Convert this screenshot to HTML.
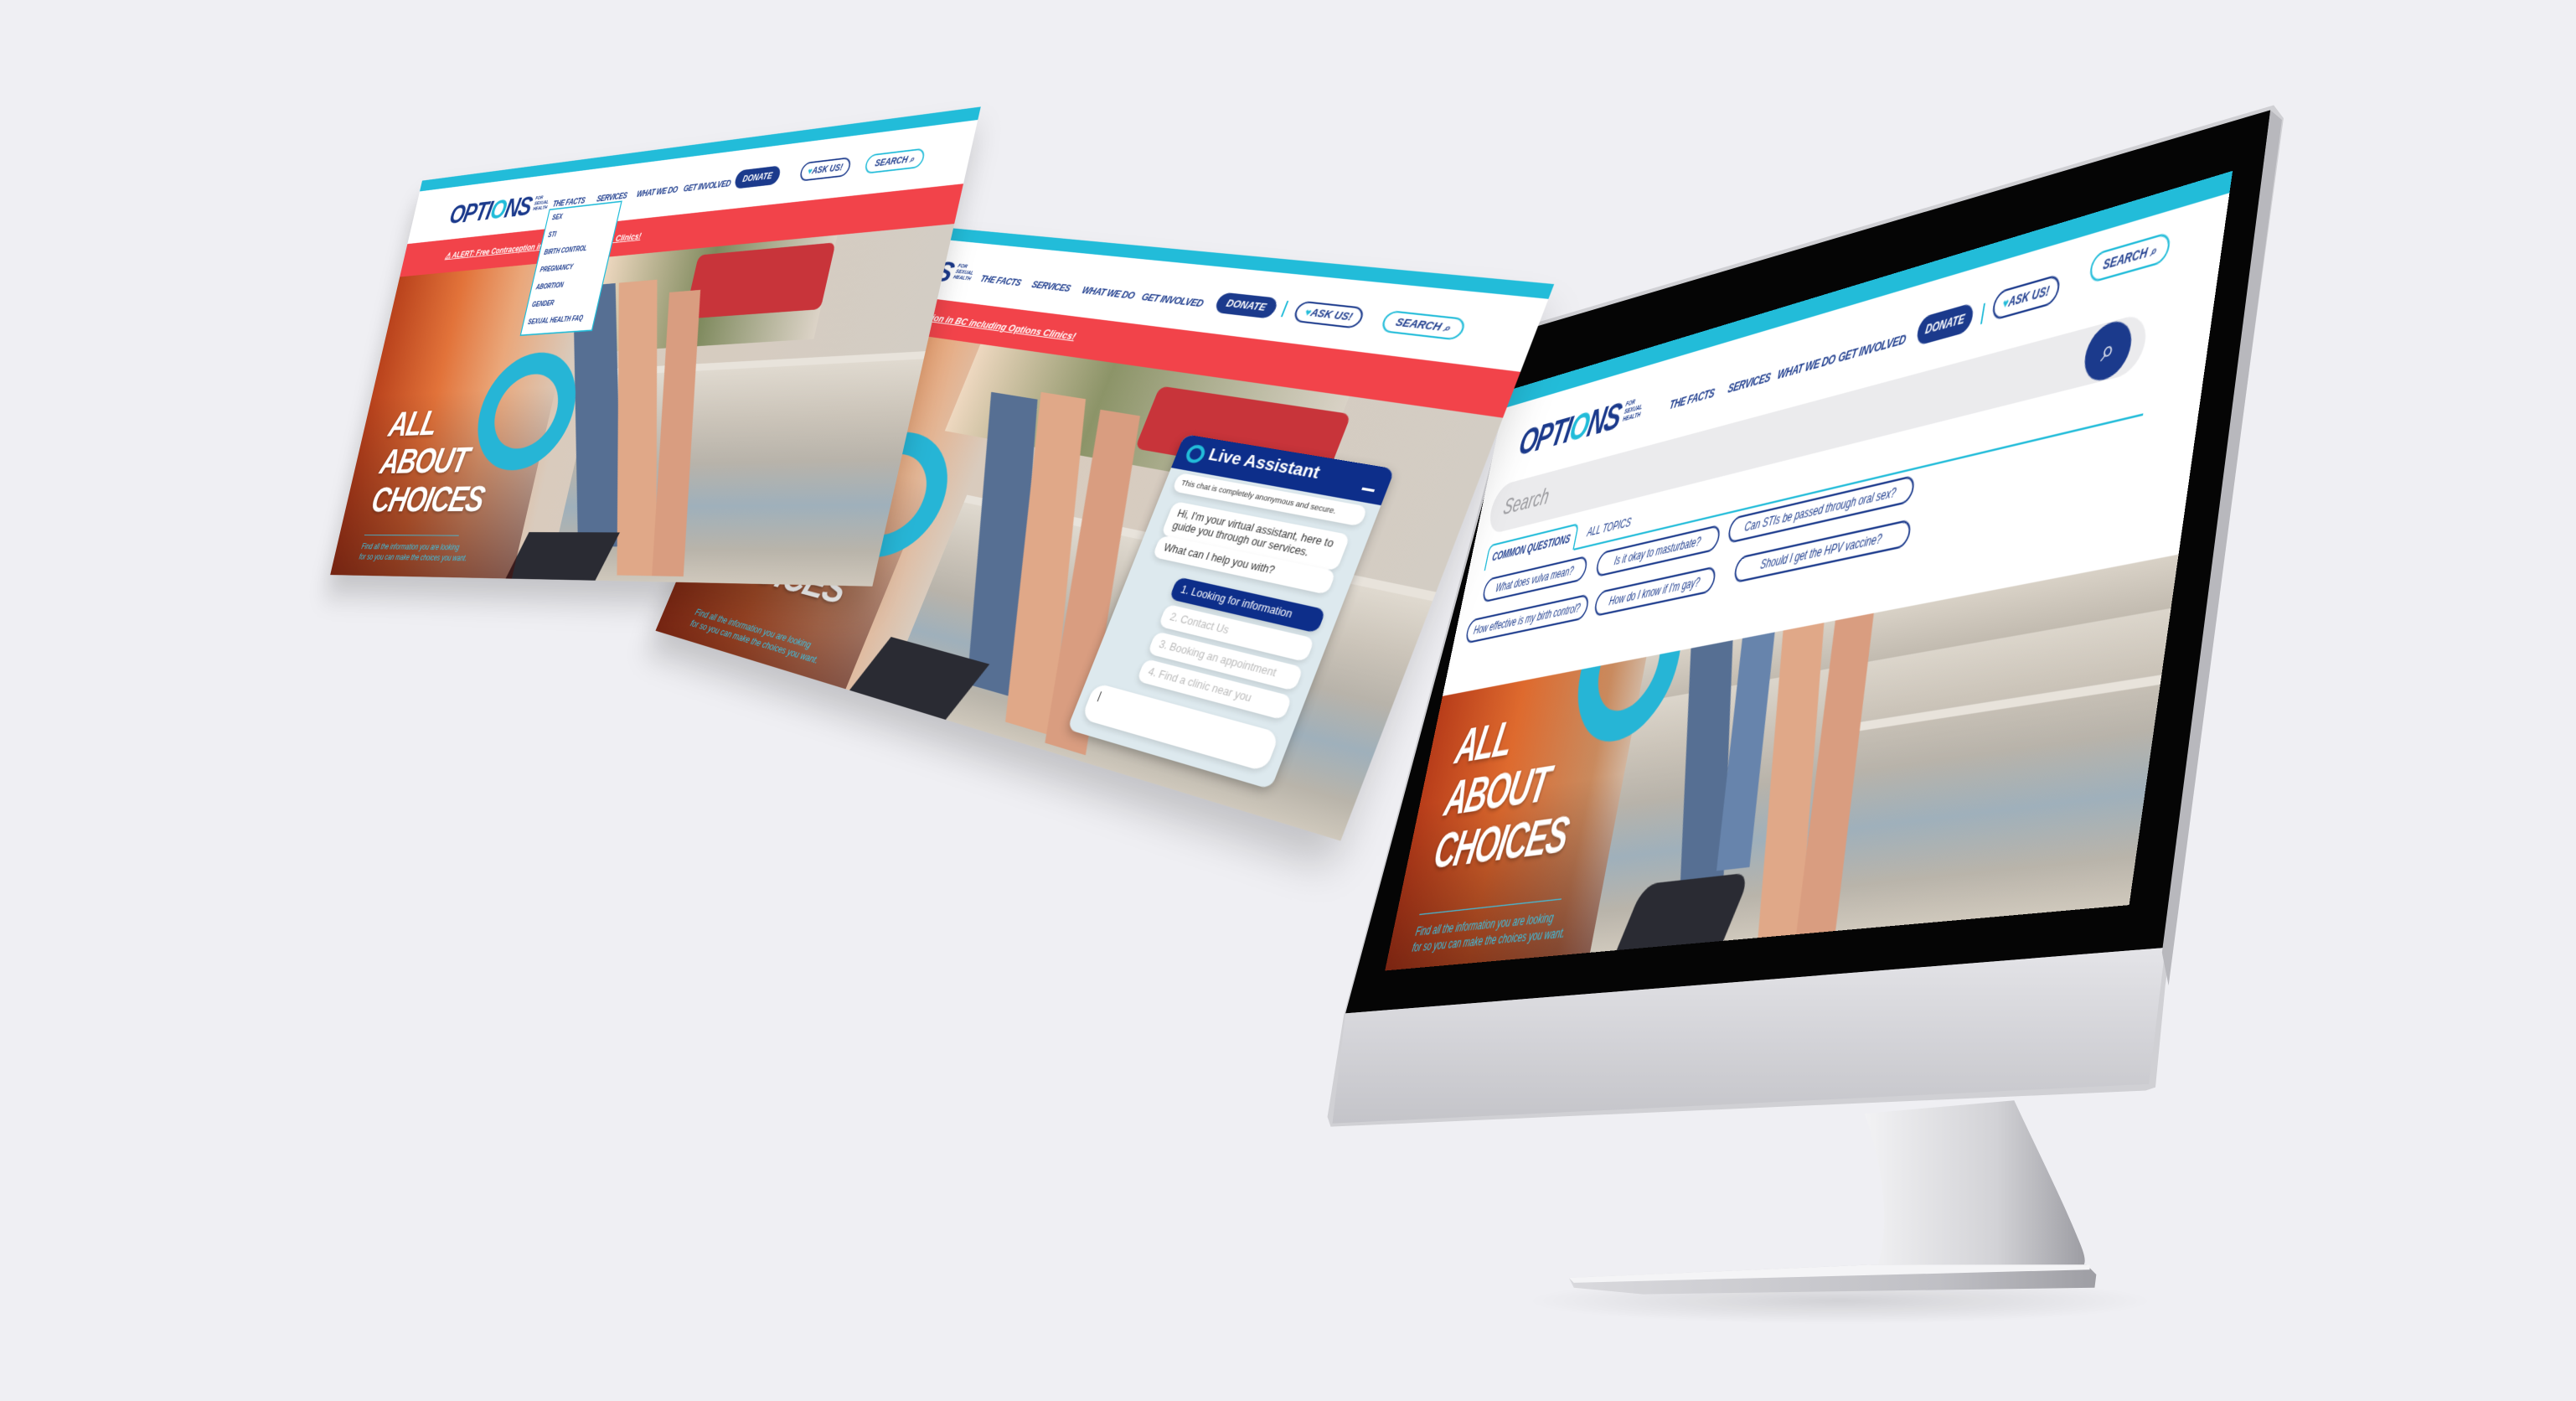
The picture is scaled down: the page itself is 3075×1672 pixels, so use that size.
<!DOCTYPE html>
<html><head><meta charset="utf-8">
<style>
html,body{margin:0;padding:0}
body{width:3075px;height:1672px;overflow:hidden;position:relative;background:#efeff3;font-family:"Liberation Sans",sans-serif}
#stage{position:absolute;left:0;top:0;width:1568px;height:853px;transform:scale(1.96110,1.96014);transform-origin:0 0}
.pg{position:absolute;left:0;top:0;width:1000px;height:620px;transform-origin:0 0;overflow:hidden;background:#fff;font-family:"Liberation Sans",sans-serif}
.cy{position:absolute;left:0;top:0;width:1000px;height:17px;background:#22bcd9}
.logo{position:absolute;font-style:italic;font-weight:bold;color:#1b3a8c;letter-spacing:-2px;white-space:nowrap}
.logo i{color:#22bcd9;font-style:italic}
.logo small{position:absolute;font-size:7px;line-height:8px;letter-spacing:0;top:8px;font-weight:bold}
.nav{position:absolute;font-style:italic;font-weight:bold;font-size:12px;color:#1b3a8c;white-space:nowrap;letter-spacing:-.5px}
.pill{position:absolute;box-sizing:border-box;border-radius:16px;font-style:italic;font-weight:bold;font-size:12px;text-align:center;white-space:nowrap}
.don{background:#1b3a8c;color:#fff}
.ask{border:2px solid #1b3a8c;color:#1b3a8c;background:#fff}
.srch{border:2px solid #22bcd9;color:#1b3a8c;background:#fff}
.red{position:absolute;left:0;top:100px;width:1000px;height:52px;background:#f2434a}
.alert{position:absolute;left:90px;top:18px;color:#fff;font-size:13px;font-style:italic;font-weight:bold;text-decoration:underline;white-space:nowrap}
.photo{position:absolute;left:0;width:1000px;overflow:hidden;background:linear-gradient(90deg,#b9421c 0%,#e2733a 14%,#eaa77a 26%,#d9cbbd 40%,#d3cdc4 100%)}
.a{position:absolute}
.big{position:absolute;color:#fff;font-style:italic;font-weight:bold;letter-spacing:-2px;line-height:1.08;text-shadow:0 2px 4px rgba(0,0,0,.3)}
.find{position:absolute;color:#3cc4e6;font-style:italic;font-size:12px;line-height:16px;white-space:nowrap}
.q{position:absolute;box-sizing:border-box;border:2px solid #1b3a8c;border-radius:14px;height:26px;font-size:12px;font-style:italic;color:#1b3a8c;line-height:22px;text-align:center;white-space:nowrap;background:#fff}
.bub{position:absolute;background:#fff;border-radius:10px;box-shadow:0 3px 6px rgba(0,0,0,.12);font-size:12px;color:#333;line-height:15px;box-sizing:border-box;padding:6px 10px}
.wall{background:linear-gradient(180deg,#e1dbd1 0%,#cbc4b9 25%,#b8b3aa 45%,#9fb0bb 65%,#b9b4aa 85%,#cfc8bc 100%)}
</style></head><body>
<div id="stage">

<svg style="position:absolute;left:0;top:0" width="1568" height="853" viewBox="0 0 1568 853">
<defs>
<linearGradient id="chin" x1="0" y1="0" x2="0" y2="1"><stop offset="0" stop-color="#e4e4e8"/><stop offset="1" stop-color="#c4c4c9"/></linearGradient>
<linearGradient id="neck" x1="0" y1="0" x2="1" y2="0"><stop offset="0" stop-color="#f2f2f4"/><stop offset=".6" stop-color="#d2d2d6"/><stop offset="1" stop-color="#9d9da3"/></linearGradient>
<linearGradient id="base" x1="0" y1="0" x2="1" y2="0"><stop offset="0" stop-color="#d9d9dd"/><stop offset=".7" stop-color="#c0c0c5"/><stop offset="1" stop-color="#9e9ea4"/></linearGradient>
<radialGradient id="sh" cx=".5" cy=".5" r=".5"><stop offset="0" stop-color="#000" stop-opacity=".12"/><stop offset="1" stop-color="#000" stop-opacity="0"/></radialGradient>
</defs>
<ellipse cx="1120" cy="792" rx="190" ry="14" fill="url(#sh)"/>
<path d="M1135 678 L1226 670 C1240 700 1255 730 1264 752 C1270 766 1272 772 1262 774 L1140 776 C1150 760 1150 720 1135 678 Z" fill="url(#neck)"/>
<path d="M955 778 L1140 770 L1270 770 L1276 776 L1275 784 L1000 788 L958 784 Z" fill="url(#base)"/>
<path d="M955 778 L1140 770 L1272 770 L1272 773 L958 781 Z" fill="#f4f4f6"/>
<polygon points="930,198 1384,64 1390,72 1318,600 1312,662 1306,664 810,686 808,680 818,618" fill="#d0d0d4"/>
<polygon points="931,200 1382,67 1318,577 819,617" fill="#050505"/>
<polygon points="819,617 1318,577 1308,660 811,684" fill="url(#chin)"/>
<polygon points="1382,67 1389,73 1320,600 1316,580" fill="#b8b8bd"/>
</svg>

<!-- iMac display page -->
<div class="pg" style="transform:matrix3d(0.14962,-0.15637,0,-0.00021514,-0.193048,0.517694,0,-0.00008743,0,0,1,0,917,238,0,1)">
 <div class="cy" style="height:20px"></div>
 <div class="logo" style="left:45px;top:46px;font-size:40px">OPTI<i>O</i>NS<small style="left:172px">FOR<br>SEXUAL<br>HEALTH</small></div>
 <div class="nav" style="left:290px;top:64px;font-size:13px">THE FACTS</div>
 <div class="nav" style="left:378px;top:64px;font-size:13px">SERVICES</div>
 <div class="nav" style="left:450px;top:64px;font-size:13px">WHAT WE DO</div>
 <div class="nav" style="left:535px;top:64px;font-size:13px">GET INVOLVED</div>
 <div class="pill don" style="left:640px;top:54px;width:70px;height:28px;line-height:28px;font-size:12px">DONATE</div>
 <div class="a" style="left:722px;top:58px;width:2px;height:20px;background:#22bcd9"></div>
 <div class="pill ask" style="left:735px;top:50px;width:80px;height:28px;line-height:24px;font-size:12px"><span style="color:#22bcd9">♥</span>ASK US!</div>
 <div class="pill srch" style="left:850px;top:40px;width:90px;height:28px;line-height:24px;font-size:12px">SEARCH ⌕</div>
 <div class="a" style="left:18px;top:110px;width:910px;height:54px;border-radius:27px;background:#ebebed"></div>
 <div class="a" style="left:40px;top:124px;font-size:24px;color:#9a9a9e;font-style:italic">Search</div>
 <div class="a" style="left:860px;top:111px;width:52px;height:52px;border-radius:50%;background:#1b3a8c;color:#fff;font-size:26px;text-align:center;line-height:50px">⌕</div>
 <div class="a" style="left:28px;top:176px;width:150px;height:28px;border:2px solid #22bcd9;border-bottom:none;border-radius:8px 8px 0 0;box-sizing:border-box;font-size:12px;font-weight:bold;font-style:italic;color:#1b3a8c;text-align:center;line-height:26px">COMMON QUESTIONS</div>
 <div class="a" style="left:195px;top:182px;font-size:12px;font-style:italic;color:#1b3a8c">ALL TOPICS</div>
 <div class="a" style="left:178px;top:203px;width:760px;height:2px;background:#22bcd9"></div>
 <div class="q" style="left:35px;top:214px;width:170px">What does vulva mean?</div>
 <div class="q" style="left:222px;top:214px;width:185px">Is it okay to masturbate?</div>
 <div class="q" style="left:420px;top:210px;width:250px">Can STIs be passed through oral sex?</div>
 <div class="q" style="left:20px;top:256px;width:200px">How effective is my birth control?</div>
 <div class="q" style="left:232px;top:256px;width:180px">How do I know if I'm gay?</div>
 <div class="q" style="left:440px;top:252px;width:235px">Should I get the HPV vaccine?</div>
 <div class="photo" style="top:335px;height:285px;background:linear-gradient(90deg,#b83d1a 0%,#de6a2e 14%,#c98a5e 28%,#d7cfc5 36%,#d2ccc3 100%)">
  <div class="a wall" style="left:330px;top:30px;width:670px;height:255px"></div>
  <div class="a" style="left:330px;top:0;width:670px;height:45px;background:linear-gradient(180deg,#d8d1c6,#c2bbb0)"></div>
  <div class="a" style="left:640px;top:100px;width:360px;height:8px;background:#e8e3db"></div>
  <div class="a" style="left:420px;top:-10px;width:60px;height:250px;background:#566f93;transform:skewX(12deg)"></div>
  <div class="a" style="left:480px;top:-10px;width:45px;height:230px;background:#6784ac;transform:skewX(6deg)"></div>
  <div class="a" style="left:545px;top:-10px;width:55px;height:300px;background:#e0a888;transform:skewX(8deg)"></div>
  <div class="a" style="left:605px;top:-10px;width:50px;height:300px;background:#d99d80;transform:skewX(4deg)"></div>
  <div class="a" style="left:380px;top:225px;width:150px;height:60px;background:#2a2b33;border-radius:20px 20px 0 0;transform:skewX(-20deg)"></div>
  <div class="a" style="left:0;top:0;width:330px;height:285px;background:linear-gradient(180deg,rgba(0,0,0,0) 40%,rgba(70,15,10,.55))"></div>
  <div class="a" style="left:230px;top:-70px;width:90px;height:90px;border:30px solid #26b5d6;border-radius:50%"></div>
  <div class="big" style="left:45px;top:32px;font-size:50px">ALL<br>ABOUT<br>CHOICES</div>
  <div class="a" style="left:40px;top:230px;width:230px;height:1px;background:#3cc4e6"></div>
  <div class="find" style="left:40px;top:240px;font-size:13px">Find all the information you are looking<br>for so you can make the choices you want.</div>
 </div>
</div>

<!-- Screen 2 -->
<div class="pg" style="box-shadow:0 30px 40px rgba(0,0,0,.18);transform:matrix3d(0.2054,-0.00209,0,-0.00024905,-0.183903,0.394016,0,-0.0000324,0,0,1,0,505,132,0,1)">
 <div class="cy"></div>
 <div class="logo" style="left:75px;top:40px;font-size:40px">OPTI<i>O</i>NS<small style="left:172px">FOR<br>SEXUAL<br>HEALTH</small></div>
 <div class="nav" style="left:290px;top:58px">THE FACTS</div>
 <div class="nav" style="left:370px;top:58px">SERVICES</div>
 <div class="nav" style="left:445px;top:58px">WHAT WE DO</div>
 <div class="nav" style="left:530px;top:58px">GET INVOLVED</div>
 <div class="pill don" style="left:630px;top:48px;width:75px;height:26px;line-height:26px">DONATE</div>
 <div class="a" style="left:715px;top:50px;width:2px;height:20px;background:#22bcd9"></div>
 <div class="pill ask" style="left:730px;top:48px;width:80px;height:26px;line-height:22px"><span style="color:#22bcd9">♥</span>ASK US!</div>
 <div class="pill srch" style="left:835px;top:48px;width:90px;height:26px;line-height:22px">SEARCH ⌕</div>
 <div class="red"><div class="alert">ALERT: Free Contraception in BC including Options Clinics!</div></div>
 <div class="photo" style="top:152px;height:468px">
  <div class="a" style="left:330px;top:0;width:500px;height:120px;background:linear-gradient(90deg,#eed8c0,#8c9468 40%,#d9d2c6)"></div>
  <div class="a" style="left:600px;top:20px;width:240px;height:80px;background:#c8343a;border-radius:10px"></div>
  <div class="a wall" style="left:400px;top:200px;width:600px;height:268px"></div>
  <div class="a" style="left:400px;top:195px;width:600px;height:10px;background:#e8e3db"></div>
  <div class="a" style="left:440px;top:60px;width:70px;height:360px;background:#566f93;transform:skewX(20deg)"></div>
  <div class="a" style="left:510px;top:50px;width:65px;height:400px;background:#e0a888;transform:skewX(18deg)"></div>
  <div class="a" style="left:585px;top:60px;width:55px;height:400px;background:#d99d80;transform:skewX(14deg)"></div>
  <div class="a" style="left:360px;top:390px;width:150px;height:80px;background:#2a2b33;transform:skewX(-20deg)"></div>
  <div class="a" style="left:0;top:0;width:340px;height:468px;background:linear-gradient(180deg,rgba(0,0,0,0) 40%,rgba(70,15,10,.6))"></div>
  <div class="a" style="left:200px;top:130px;width:110px;height:110px;border:30px solid #26b5d6;border-radius:50%"></div>
  <div class="big" style="left:55px;top:210px;font-size:52px">ALL<br>ABOUT<br>CHOICES</div>
  <div class="find" style="left:55px;top:420px">Find all the information you are looking<br>for so you can make the choices you want.</div>
 </div>
 <div class="a" style="left:655px;top:225px;width:255px;height:365px;border-radius:12px;background:#dde9ee;box-shadow:0 4px 12px rgba(0,0,0,.25);overflow:hidden">
  <div class="a" style="left:0;top:0;width:255px;height:42px;background:#0d2e8a"></div>
  <div class="a" style="left:12px;top:10px;width:14px;height:14px;border:4px solid #22bcd9;border-radius:50%"></div>
  <div class="a" style="left:40px;top:8px;color:#fff;font-size:20px;font-weight:bold">Live Assistant</div>
  <div class="a" style="left:228px;top:26px;width:14px;height:3px;background:#fff"></div>
  <div class="bub" style="left:12px;top:46px;width:230px;font-size:9px;padding:4px 8px">This chat is completely anonymous and secure.</div>
  <div class="bub" style="left:20px;top:80px;width:215px">Hi, I'm your virtual assistant, here to guide you through our services.</div>
  <div class="bub" style="left:20px;top:122px;width:215px">What can I help you with?</div>
  <div class="bub" style="left:60px;top:165px;width:180px;background:#0d2e8a;color:#fff">1. Looking for information</div>
  <div class="bub" style="left:60px;top:198px;width:180px;color:#bbb">2. Contact Us</div>
  <div class="bub" style="left:60px;top:231px;width:180px;color:#bbb">3. Booking an appointment</div>
  <div class="bub" style="left:60px;top:264px;width:180px;color:#bbb">4. Find a clinic near you</div>
  <div class="bub" style="left:12px;top:305px;width:230px;height:44px;border-radius:16px">|</div>
 </div>
</div>

<!-- Screen 1 -->
<div class="pg" style="box-shadow:0 30px 40px rgba(0,0,0,.18);transform:matrix3d(0.23376,-0.05657,0,-0.00017796,-0.092032,0.384113,0,-0.00000853,0,0,1,0,257,110,0,1)">
 <div class="cy"></div>
 <div class="logo" style="left:80px;top:40px;font-size:40px">OPTI<i>O</i>NS<small style="left:172px">FOR<br>SEXUAL<br>HEALTH</small></div>
 <div class="nav" style="left:290px;top:56px">THE FACTS</div>
 <div class="nav" style="left:375px;top:56px">SERVICES</div>
 <div class="nav" style="left:450px;top:56px">WHAT WE DO</div>
 <div class="nav" style="left:535px;top:56px">GET INVOLVED</div>
 <div class="pill don" style="left:625px;top:46px;width:75px;height:26px;line-height:26px">DONATE</div>
 <div class="pill ask" style="left:735px;top:46px;width:80px;height:26px;line-height:22px"><span style="color:#22bcd9">♥</span>ASK US!</div>
 <div class="pill srch" style="left:840px;top:46px;width:90px;height:26px;line-height:22px">SEARCH ⌕</div>
 <div class="red"><div class="alert">⚠ ALERT: Free Contraception in BC including Options Clinics!</div></div>
 <div class="photo" style="top:152px;height:468px">
  <div class="a" style="left:420px;top:0;width:400px;height:140px;background:linear-gradient(90deg,#eed8c0,#7f8a5e 50%,#dcd3c7)"></div>
  <div class="a" style="left:590px;top:10px;width:230px;height:90px;background:#c8343a;border-radius:10px"></div>
  <div class="a wall" style="left:450px;top:170px;width:550px;height:298px"></div>
  <div class="a" style="left:450px;top:165px;width:550px;height:10px;background:#e8e3db"></div>
  <div class="a" style="left:430px;top:40px;width:80px;height:380px;background:#566f93;transform:skewX(18deg)"></div>
  <div class="a" style="left:515px;top:40px;width:70px;height:420px;background:#e0a888;transform:skewX(16deg)"></div>
  <div class="a" style="left:595px;top:60px;width:55px;height:400px;background:#d99d80;transform:skewX(12deg)"></div>
  <div class="a" style="left:380px;top:400px;width:170px;height:70px;background:#2a2b33;transform:skewX(-20deg)"></div>
  <div class="a" style="left:0;top:0;width:380px;height:468px;background:linear-gradient(180deg,rgba(0,0,0,0) 40%,rgba(70,15,10,.6))"></div>
  <div class="a" style="left:240px;top:135px;width:120px;height:110px;border:32px solid #26b5d6;border-radius:50%"></div>
  <div class="big" style="left:55px;top:205px;font-size:54px">ALL<br>ABOUT<br>CHOICES</div>
  <div class="a" style="left:55px;top:405px;width:200px;height:1px;background:#3cc4e6"></div>
  <div class="find" style="left:55px;top:415px">Find all the information you are looking<br>for so you can make the choices you want.</div>
 </div>
 <div class="a" style="left:285px;top:70px;width:140px;height:190px;background:#fff;border:2px solid #22bcd9;box-sizing:border-box">
  <div style="font-size:10px;font-weight:bold;font-style:italic;color:#1b3a8c;line-height:26px;padding-left:8px">SEX<br>STI<br>BIRTH CONTROL<br>PREGNANCY<br>ABORTION<br>GENDER<br>SEXUAL HEALTH FAQ</div>
 </div>
</div>

</div>
</body></html>
